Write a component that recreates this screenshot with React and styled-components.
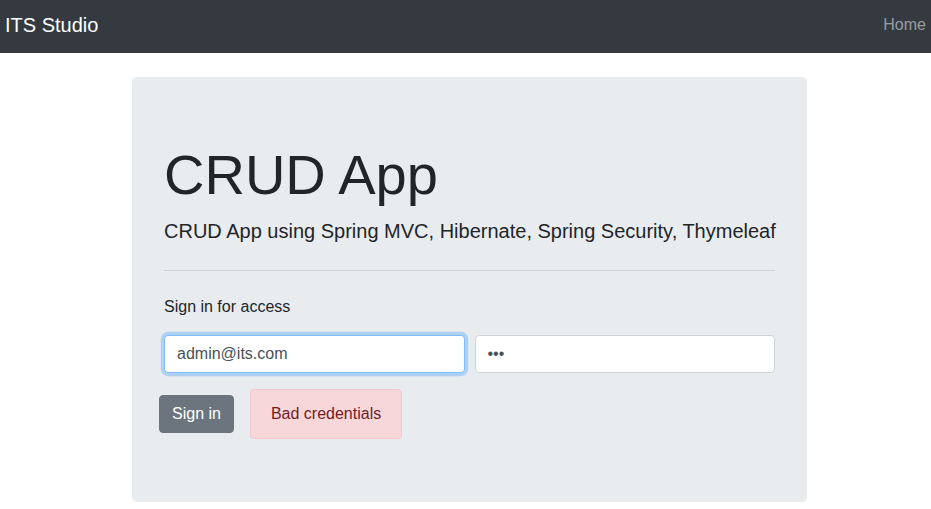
import React from "react";
import styled, { createGlobalStyle } from "styled-components";

const GlobalStyle = createGlobalStyle`
  body {
    margin: 0;
    font-family: "Liberation Sans", Arial, sans-serif;
    font-size: 16px;
    line-height: 1.5;
    color: #212529;
    background: #fff;
  }
  * { box-sizing: border-box; }
`;

const Navbar = styled.nav`
  height: 53px;
  background-color: #343a40;
  display: flex;
  align-items: center;
  justify-content: space-between;
  padding: 0 5px 4px 5px;
`;

const Brand = styled.a`
  color: #fff;
  font-size: 20px;
  line-height: 30px;
  text-decoration: none;
`;

const NavLink = styled.a`
  color: rgba(255, 255, 255, 0.5);
  font-size: 16px;
  line-height: 24px;
  text-decoration: none;
`;

const Main = styled.main`
  padding: 24px 0 0 132px;
`;

const Jumbotron = styled.div`
  width: 675px;
  height: 425px;
  background-color: #e9ecef;
  border-radius: 4.8px;
  padding: 64px 32px;
`;

const Title = styled.h1`
  margin: 0 0 8px;
  font-size: 56px;
  font-weight: 300;
  line-height: 1.2;
`;

const Lead = styled.p`
  margin: 0;
  font-size: 20px;
  font-weight: 300;
  line-height: 30px;
  white-space: nowrap;
`;

const Rule = styled.hr`
  margin: 24px 0;
  border: 0;
  border-top: 1px solid rgba(0, 0, 0, 0.1);
`;

const Text = styled.p`
  margin: 0 0 16px;
`;

const Fields = styled.div`
  display: grid;
  grid-template-columns: 1fr 1fr;
  gap: 10px;
  margin-bottom: 16px;
`;

const Input = styled.input`
  height: 38px;
  padding: 6px 12px;
  font-family: inherit;
  font-size: 16px;
  color: #495057;
  background: #fff;
  border: 1px solid ${(p) => (p.$focus ? "#80bdff" : "#ced4da")};
  border-radius: 4px;
  box-shadow: ${(p) => (p.$focus ? "0 0 0 3.2px rgba(0,123,255,.25)" : "none")};
  outline: none;
`;

const Actions = styled.div`
  display: flex;
  align-items: center;
  gap: 16px;
  margin-left: -5px;
`;

const Button = styled.button`
  height: 38px;
  padding: 6px 12px;
  font-family: inherit;
  font-size: 16px;
  line-height: 24px;
  color: #fff;
  background-color: #6c757d;
  border: 1px solid #6c757d;
  border-radius: 4px;
`;

const Alert = styled.div`
  padding: 12px 20px;
  color: #721c24;
  background-color: #f8d7da;
  border: 1px solid #f5c6cb;
  border-radius: 4px;
`;

export default function App() {
  return (
    <>
      <GlobalStyle />
      <Navbar>
        <Brand href="#">ITS Studio</Brand>
        <NavLink href="#">Home</NavLink>
      </Navbar>
      <Main>
        <Jumbotron>
          <Title>CRUD App</Title>
          <Lead>CRUD App using Spring MVC, Hibernate, Spring Security, Thymeleaf</Lead>
          <Rule />
          <Text>Sign in for access</Text>
          <Fields>
            <Input $focus type="text" defaultValue="admin@its.com" />
            <Input type="password" defaultValue="abc" />
          </Fields>
          <Actions>
            <Button>Sign in</Button>
            <Alert>Bad credentials</Alert>
          </Actions>
        </Jumbotron>
      </Main>
    </>
  );
}
